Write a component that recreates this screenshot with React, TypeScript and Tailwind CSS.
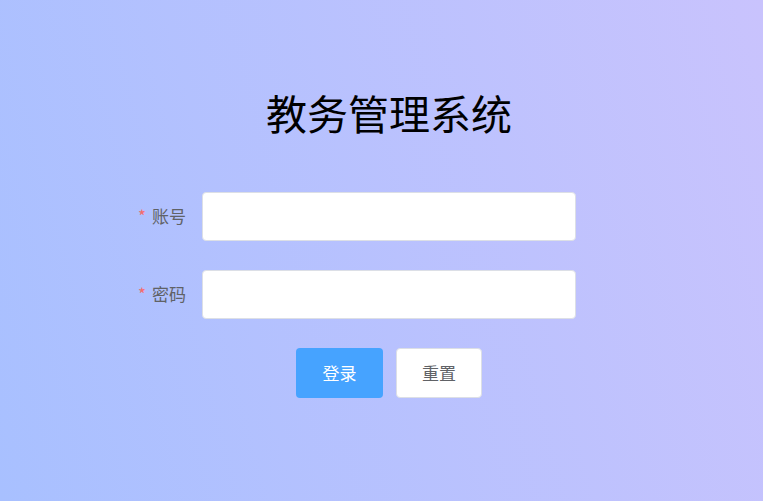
export default function App() {
  return (
    <div className="w-full h-[501px] overflow-hidden bg-[linear-gradient(75deg,#a8c0ff,#c9c3fd)] font-['Noto_Sans_CJK_SC','Noto_Sans',sans-serif]">
      <div className="w-[534px] ml-[122px] pt-[86px] flex flex-col">
        <h1 className="text-center text-[41px] leading-[52px] text-black font-normal">
          教务管理系统
        </h1>
        <form className="mt-[54px] flex flex-col gap-[29px]">
          <div className="flex items-center">
            <label className="w-[80px] pr-[16px] text-right text-[17px] leading-[24px] text-[#606266] -mt-[2px]">
              <span className="text-[#f56c6c] mr-[6px]">*</span>账号
            </label>
            <input
              type="text"
              className="w-[374px] h-[49px] rounded-[4px] bg-white border border-[#dcdfe6] px-[15px] outline-none"
            />
          </div>
          <div className="flex items-center">
            <label className="w-[80px] pr-[16px] text-right text-[17px] leading-[24px] text-[#606266] -mt-[2px]">
              <span className="text-[#f56c6c] mr-[6px]">*</span>密码
            </label>
            <input
              type="password"
              className="w-[374px] h-[49px] rounded-[4px] bg-white border border-[#dcdfe6] px-[15px] outline-none"
            />
          </div>
          <div className="ml-[80px] w-[374px] flex justify-center gap-[13px]">
            <button
              type="button"
              className="w-[87px] h-[50px] rounded-[4px] bg-[#46a3ff] text-white text-[17px]"
            >
              登录
            </button>
            <button
              type="button"
              className="w-[86px] h-[50px] rounded-[4px] bg-white border border-[#dcdfe6] text-[#606266] text-[17px]"
            >
              重置
            </button>
          </div>
        </form>
      </div>
    </div>
  );
}
